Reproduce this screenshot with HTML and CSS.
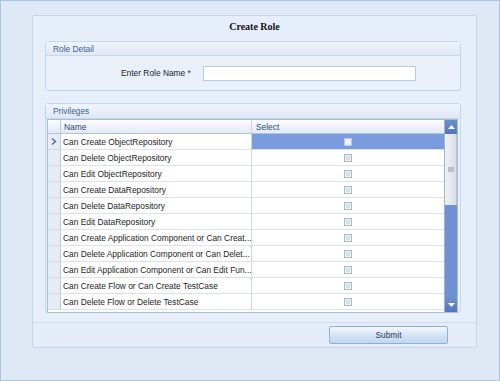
FILE: index.html
```html
<!DOCTYPE html>
<html lang="en">
<head>
  <meta charset="UTF-8" />
  <title>Create Role</title>
  <link rel="stylesheet" href="styles.css">
</head>
<body>
  <div class="window">
    <div class="panel">
      <h1 class="title">Create Role</h1>

      <div class="group role-group">
        <div class="group-header">Role Detail</div>
        <div class="role-body">
          <label for="roleName">Enter Role Name *</label>
          <input type="text" id="roleName" />
        </div>
      </div>

      <div class="group priv-group">
        <div class="group-header">Privileges</div>
        <div class="grid">
          <div class="table">
            <div class="row head">
              <div class="rh"></div>
              <div class="cell name">Name</div>
              <div class="cell select">Select</div>
            </div>
            <div class="row current">
              <div class="rh"><svg width="6" height="7" viewBox="0 0 6 7"><path d="M1 0.5 L4.5 3.5 L1 6.5" fill="none" stroke="#4a6a9c" stroke-width="1.4"/></svg></div>
              <div class="cell name">Can Create ObjectRepository</div>
              <div class="cell select"><span class="check"></span></div>
            </div>
            <div class="row">
              <div class="rh"></div>
              <div class="cell name">Can Delete ObjectRepository</div>
              <div class="cell select"><span class="check"></span></div>
            </div>
            <div class="row">
              <div class="rh"></div>
              <div class="cell name">Can Edit ObjectRepository</div>
              <div class="cell select"><span class="check"></span></div>
            </div>
            <div class="row">
              <div class="rh"></div>
              <div class="cell name">Can Create DataRepository</div>
              <div class="cell select"><span class="check"></span></div>
            </div>
            <div class="row">
              <div class="rh"></div>
              <div class="cell name">Can Delete DataRepository</div>
              <div class="cell select"><span class="check"></span></div>
            </div>
            <div class="row">
              <div class="rh"></div>
              <div class="cell name">Can Edit DataRepository</div>
              <div class="cell select"><span class="check"></span></div>
            </div>
            <div class="row">
              <div class="rh"></div>
              <div class="cell name">Can Create Application Component or Can Creat...</div>
              <div class="cell select"><span class="check"></span></div>
            </div>
            <div class="row">
              <div class="rh"></div>
              <div class="cell name">Can Delete Application Component or Can Delet...</div>
              <div class="cell select"><span class="check"></span></div>
            </div>
            <div class="row">
              <div class="rh"></div>
              <div class="cell name">Can Edit Application Component or Can Edit Fun...</div>
              <div class="cell select"><span class="check"></span></div>
            </div>
            <div class="row">
              <div class="rh"></div>
              <div class="cell name">Can Create Flow or Can Create TestCase</div>
              <div class="cell select"><span class="check"></span></div>
            </div>
            <div class="row">
              <div class="rh"></div>
              <div class="cell name">Can Delete Flow or Delete TestCase</div>
              <div class="cell select"><span class="check"></span></div>
            </div>
          </div>
          <div class="scrollbar">
            <div class="sb-btn"><svg width="7" height="4" viewBox="0 0 7 4"><path d="M0 4 L3.5 0 L7 4 Z" fill="#fff"/></svg></div>
            <div class="sb-thumb"><span class="grip"></span></div>
            <div class="sb-track"></div>
            <div class="sb-btn"><svg width="7" height="4" viewBox="0 0 7 4"><path d="M0 0 L3.5 4 L7 0 Z" fill="#fff"/></svg></div>
          </div>
        </div>
      </div>

      <div class="footer">
        <button type="button">Submit</button>
      </div>
    </div>
  </div>
</body>
</html>
```

FILE: styles.css
```css
html, body {
  margin: 0;
  padding: 0;
}
body {
  font-family: "Liberation Sans", Arial, sans-serif;
  font-size: 8.4px;
  color: #1e1e1e;
  background: #dce7f5;
}
.window {
  box-sizing: border-box;
  width: 500px;
  height: 381px;
  border: 1px solid #a9c3e5;
  padding: 14px 22px 0 31px;
  background: #dfe9f6;
}
.panel {
  box-sizing: border-box;
  width: 445px;
  height: 333px;
  border: 1px solid #c4d5ec;
  border-radius: 2px;
  background: #e6eef9;
  display: flex;
  flex-direction: column;
}
.title {
  margin: 0;
  height: 25px;
  padding-top: 4px;
  box-sizing: border-box;
  font-family: "Liberation Serif", "Times New Roman", serif;
  font-size: 10px;
  line-height: 14px;
  font-weight: bold;
  text-align: center;
  color: #111;
}
/* Group boxes */
.group {
  box-sizing: border-box;
  width: 416px;
  margin-left: 12px;
  border: 1px solid #c5d5ea;
  border-radius: 3px;
  background: #e9f0fa;
}
.group-header {
  box-sizing: border-box;
  height: 14px;
  padding-left: 7px;
  line-height: 14px;
  color: #3d5f92;
  background: linear-gradient(#eff4fb, #dfe8f5);
  border-bottom: 1px solid #c8d7eb;
}
.role-group {
  height: 50px;
}
.role-body {
  height: 34px;
  display: flex;
  align-items: center;
  padding-left: 75px;
}
.role-body label {
  margin-right: 12px;
}
.role-body input {
  box-sizing: border-box;
  width: 213px;
  height: 15px;
  border: 1px solid #bccbe0;
  background: #fff;
  padding: 0 3px;
  font: inherit;
}
.priv-group {
  height: 210px;
  margin-top: 12px;
  padding: 0 2px 1px 1px;
}
.priv-group .group-header {
  height: 15px;
  line-height: 15px;
  margin: 0 -2px 0 -1px;
}
/* Data grid */
.grid {
  display: flex;
  height: 192px;
  border: 1px solid #a9bcd6;
  background: #fff;
}
.table {
  width: 396px;
}
.row {
  display: flex;
  height: 16px;
}
.row.head {
  height: 14px;
  background: linear-gradient(#fbfcfe, #e3eaf4);
  border-bottom: 1px solid #b2c3da;
  box-sizing: border-box;
}
.rh {
  box-sizing: border-box;
  width: 13px;
  flex: none;
  background: #e5ecf6;
  border-right: 1px solid #b9c9de;
  border-bottom: 1px solid #d3dce9;
  display: flex;
  align-items: center;
  justify-content: center;
}
.head .rh {
  border-bottom: none;
  background: transparent;
}
.cell {
  box-sizing: border-box;
  border-bottom: 1px solid #dbe2ec;
  white-space: nowrap;
  overflow: hidden;
  line-height: 17px;
}
.cell.name {
  width: 191px;
  padding-left: 2px;
  border-right: 1px solid #c9d5e5;
}
.cell.select {
  width: 192px;
  display: flex;
  align-items: center;
  justify-content: center;
}
.head .cell {
  border-bottom: none;
  line-height: 14px;
  color: #2b4a78;
}
.head .cell.name {
  padding-left: 3px;
}
.head .cell.select {
  display: block;
  padding-left: 4px;
}
.current .cell.select {
  background: #7b9bdf;
}
.check {
  box-sizing: border-box;
  width: 8px;
  height: 8px;
  border: 1px solid #a8b7cf;
  background: #d6deea;
  box-shadow: inset 0 0 0 1px #eef2f8;
}
.current .check {
  border-color: #b9c7e4;
  background: #eef2fa;
}
/* Scrollbar */
.scrollbar {
  width: 13px;
  display: flex;
  flex-direction: column;
  border-left: 1px solid #9fb4d4;
}
.sb-btn {
  height: 14px;
  flex: none;
  background: linear-gradient(#6d8fcc, #5276b8);
  display: flex;
  align-items: center;
  justify-content: center;
}
.sb-thumb {
  height: 71px;
  flex: none;
  background: linear-gradient(90deg, #eef1f5, #d9dee6);
  border-right: 1px solid #b9c3d2;
  display: flex;
  align-items: center;
  justify-content: center;
}
.grip {
  width: 6px;
  height: 5px;
  background: #b7c0cc;
}
.sb-track {
  flex: 1;
  background: #6f90d1;
}
/* Footer */
.footer {
  margin-top: 9px;
  flex: 1;
  border-top: 1px solid #d0dcee;
  background: #e4ecf8;
  display: flex;
  justify-content: flex-end;
  padding: 3px 28px 0 0;
  align-items: flex-start;
}
button {
  width: 119px;
  height: 18px;
  border: 1px solid #8fafd8;
  border-radius: 2px;
  background: linear-gradient(#f3f7fd, #d3e2f4 55%, #c2d6ef);
  font-family: "Liberation Sans", Arial, sans-serif;
  font-size: 8.4px;
  color: #2a3c5a;
  padding: 0;
  cursor: pointer;
}
```
